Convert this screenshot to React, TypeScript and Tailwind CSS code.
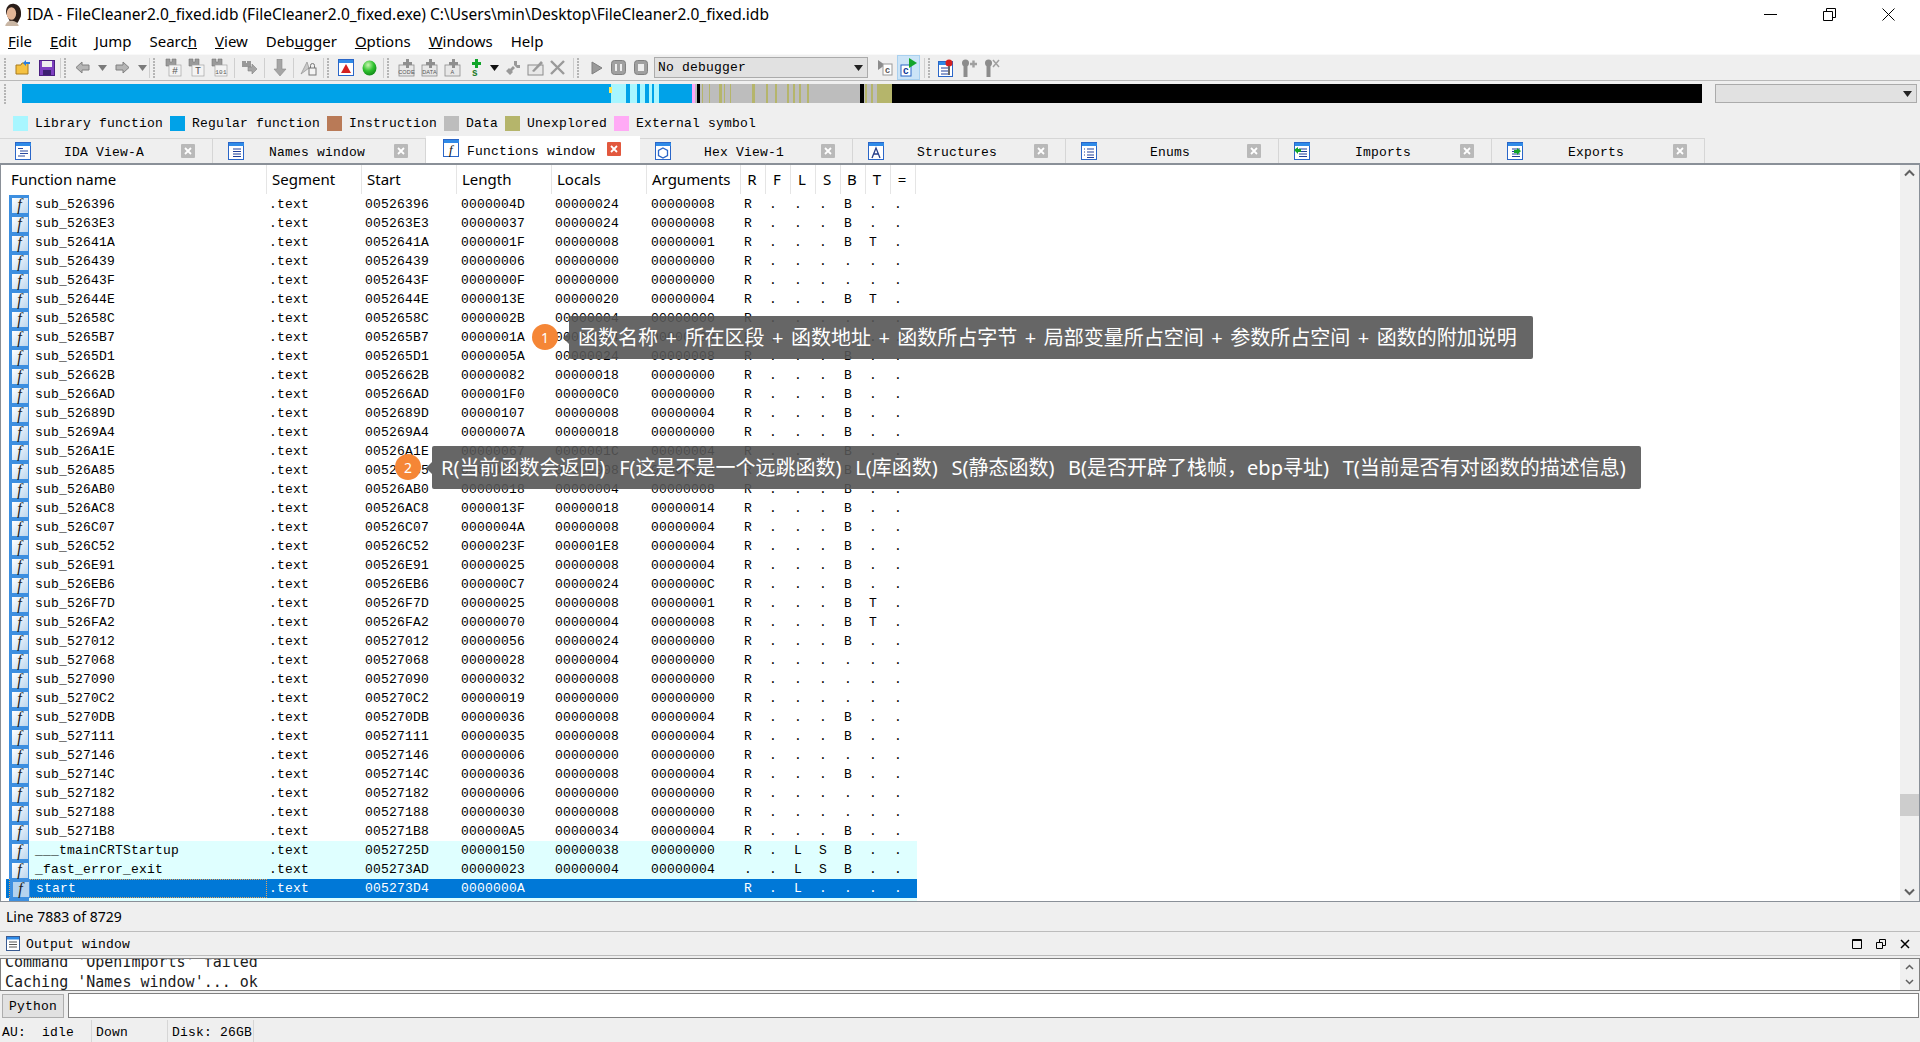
import type { ReactNode } from "react";

const SANS = "font-['Noto_Sans','Noto_Sans_CJK_SC',sans-serif]";

const rows = [
  "sub_526396 00526396 0000004D 00000024 00000008 R...B..",
  "sub_5263E3 005263E3 00000037 00000024 00000008 R...B..",
  "sub_52641A 0052641A 0000001F 00000008 00000001 R...BT.",
  "sub_526439 00526439 00000006 00000000 00000000 R......",
  "sub_52643F 0052643F 0000000F 00000000 00000000 R......",
  "sub_52644E 0052644E 0000013E 00000020 00000004 R...BT.",
  "sub_52658C 0052658C 0000002B 00000004 00000000 R......",
  "sub_5265B7 005265B7 0000001A 00000004 00000000 R......",
  "sub_5265D1 005265D1 0000005A 00000024 00000008 R...B..",
  "sub_52662B 0052662B 00000082 00000018 00000000 R...B..",
  "sub_5266AD 005266AD 000001F0 000000C0 00000000 R...B..",
  "sub_52689D 0052689D 00000107 00000008 00000004 R...B..",
  "sub_5269A4 005269A4 0000007A 00000018 00000000 R...B..",
  "sub_526A1E 00526A1E 00000067 0000001C 00000004 R...B..",
  "sub_526A85 00526A85 0000002B 00000008 00000004 R...B..",
  "sub_526AB0 00526AB0 00000018 00000004 00000008 R...B..",
  "sub_526AC8 00526AC8 0000013F 00000018 00000014 R...B..",
  "sub_526C07 00526C07 0000004A 00000008 00000004 R...B..",
  "sub_526C52 00526C52 0000023F 000001E8 00000004 R...B..",
  "sub_526E91 00526E91 00000025 00000008 00000004 R...B..",
  "sub_526EB6 00526EB6 000000C7 00000024 0000000C R...B..",
  "sub_526F7D 00526F7D 00000025 00000008 00000001 R...BT.",
  "sub_526FA2 00526FA2 00000070 00000004 00000008 R...BT.",
  "sub_527012 00527012 00000056 00000024 00000000 R...B..",
  "sub_527068 00527068 00000028 00000004 00000000 R......",
  "sub_527090 00527090 00000032 00000008 00000000 R......",
  "sub_5270C2 005270C2 00000019 00000000 00000000 R......",
  "sub_5270DB 005270DB 00000036 00000008 00000004 R...B..",
  "sub_527111 00527111 00000035 00000008 00000004 R...B..",
  "sub_527146 00527146 00000006 00000000 00000000 R......",
  "sub_52714C 0052714C 00000036 00000008 00000004 R...B..",
  "sub_527182 00527182 00000006 00000000 00000000 R......",
  "sub_527188 00527188 00000030 00000008 00000000 R......",
  "sub_5271B8 005271B8 000000A5 00000034 00000004 R...B..",
  "___tmainCRTStartup 0052725D 00000150 00000038 00000000 R.LSB..",
  "_fast_error_exit 005273AD 00000023 00000004 00000004 ..LSB..",
  "start 005273D4 0000000A - - R.L....",
  "__security_check_cookie(x) 00527400 00000010 00000000 00000004 R.L....",
];

const OLIVE = "#b5b56b";
const GRAY = "#bdbdbd";
const CYAN = "#a8f6ff";
const BLUE = "#00a2e8";
const navSegments: [number, number, string][] = [
  [0, 589, BLUE], [589, 604, CYAN], [604, 608, BLUE], [608, 615, CYAN], [615, 618, BLUE], [618, 623, CYAN],
  [623, 627, BLUE], [627, 630, CYAN], [630, 632, BLUE], [632, 637, CYAN], [637, 670, BLUE], [670, 673, "#ffa8f5"],
  [673, 675, GRAY], [675, 678, "#000"], [678, 838, GRAY],
  [680, 681, OLIVE], [687, 688, OLIVE], [697, 700, OLIVE], [702, 703, OLIVE], [708, 709, OLIVE], [730, 733, OLIVE],
  [744, 746, OLIVE], [753, 755, OLIVE], [765, 767, OLIVE], [771, 773, OLIVE], [777, 779, OLIVE], [785, 787, OLIVE],
  [838, 842, "#000"], [842, 870, GRAY], [843, 845, OLIVE], [849, 851, OLIVE], [855, 870, OLIVE], [870, 1680, "#000"],
];

const legend = [
  ["Library function", "bg-[#a8f6ff]", "w-[157px]"],
  ["Regular function", "bg-[#00a2e8]", "w-[157px]"],
  ["Instruction", "bg-[#b97a57]", "w-[117px]"],
  ["Data", "bg-[#bdbdbd]", "w-[61px]"],
  ["Unexplored", "bg-[#b5b56b]", "w-[109px]"],
  ["External symbol", "bg-[#ffaaf5]", "w-[150px]"],
];

const Handle = () => (
  <div className="flex h-[20px] w-[3px] shrink-0 flex-col justify-between">
    {[0, 1, 2, 3, 4, 5, 6].map((i) => (
      <span key={i} className="h-[2px] w-[2px] bg-[#b5b5b5]" />
    ))}
  </div>
);

const Sep = () => <span className="h-[20px] w-px shrink-0 bg-[#cfcfcf]" />;

const Caret = ({ color = "#7a7a7a" }: { color?: string }) => (
  <svg width="9" height="6" viewBox="0 0 9 6" className="shrink-0">
    <path d="M0 0h9L4.5 6z" fill={color} />
  </svg>
);

const Binoc = ({ label, small }: { label: string; small?: boolean }) => (
  <svg width="17" height="19" viewBox="0 0 17 19" className="shrink-0">
    <path d="M1 1h4v3h2V1h4v7H1z" fill="#9a9a9a" stroke="#777" strokeWidth=".6" />
    <rect x="4" y="7" width="12" height="11" fill="#f4f4f4" stroke="#a5a5a5" strokeWidth=".7" />
    <text x="10" y="16" fontSize={small ? 6 : 10} textAnchor="middle" fontFamily="Liberation Mono" fill="#555">
      {label}
    </text>
  </svg>
);

const PlusBox = ({ label }: { label: string }) => (
  <svg width="17" height="19" viewBox="0 0 17 19" className="shrink-0">
    <rect x="1" y="7" width="15" height="11" fill="#e8e8e8" stroke="#8c8c8c" strokeWidth=".8" />
    <path d="M8 1h3v3h3v3h-3v3H8V7H5V4h3z" fill="#8f8f8f" />
    <text x="8.5" y="16" fontSize="5.5" textAnchor="middle" fontFamily="Liberation Sans" fill="#555">
      {label}
    </text>
  </svg>
);

const WinIcon = ({ children }: { children: ReactNode }) => (
  <svg width="17" height="19" viewBox="0 0 17 19" className="shrink-0">
    <rect x=".5" y=".5" width="15" height="17" fill="#fff" stroke="#2a66c8" />
    <rect x="1" y="1" width="15" height="3" fill="#2f8be8" />
    {children}
  </svg>
);

const listLines = (
  <path d="M5 7h8M5 9.500h8M5 12h8M5 14.500h8" stroke="#1f3f9a" strokeWidth="1.200" />
);

const tabs: { label: string; icon: ReactNode }[] = [
  { label: "IDA View-A", icon: <WinIcon><path d="M3 6.500h5M5 9h8M5 11.500h8M3 14h7" stroke="#2b4aa0" /></WinIcon> },
  { label: "Names window", icon: <WinIcon>{listLines}</WinIcon> },
  { label: "Functions window", icon: <WinIcon><text x="8" y="15" fontSize="13" fontStyle="italic" textAnchor="middle" fontFamily="Liberation Serif" fill="#111">f</text></WinIcon> },
  { label: "Hex View-1", icon: <WinIcon><path d="M8 6l4.500 2.500v5L8 16l-4.500-2.500v-5z" fill="none" stroke="#2a66c8" strokeWidth="1.300" /></WinIcon> },
  { label: "Structures", icon: <WinIcon><path d="M4 16L8 6l4 10M5.500 12h5" fill="none" stroke="#29408a" strokeWidth="1.300" /></WinIcon> },
  { label: "Enums", icon: <WinIcon><path d="M6 7h7M6 10h7M6 13h7M6 15.500h7M3 7h1M3 10h1M3 13h1" stroke="#1f3f9a" /></WinIcon> },
  { label: "Imports", icon: <WinIcon>{listLines}<path d="M0 8l4-3v2h3v3H4v2z" fill="#12a52a" /></WinIcon> },
  { label: "Exports", icon: <WinIcon>{listLines}<path d="M14 9l-4-3v2H7v3h3v2z" fill="#12a52a" /></WinIcon> },
];

const TabClose = ({ active }: { active: boolean }) => (
  <span
    className={`flex h-[14px] w-[14px] shrink-0 items-center justify-center rounded-[1px] ${
      active ? "bg-[#e2583e]" : "bg-[#b9b9b9]"
    }`}
  >
    <svg width="8" height="8" viewBox="0 0 8 8">
      <path d="M1 1l6 6M7 1L1 7" stroke="#fff" strokeWidth="1.800" />
    </svg>
  </span>
);

const FuncIcon = ({ selected }: { selected?: boolean }) => (
  <svg width="20" height="19" viewBox="0 0 20 19" className="shrink-0">
    <defs>
      <linearGradient id="fbody" x1="0" y1="0" x2="1" y2="1">
        <stop offset="0" stopColor="#fff" />
        <stop offset="1" stopColor="#bcd6ee" />
      </linearGradient>
    </defs>
    <rect width="20" height="19" fill="#3d8fe0" />
    <rect x="3" y="3" width="16" height="15" fill={selected ? "#b4d2ee" : "url(#fbody)"} />
    <text x="10.500" y="15" fontSize="16" fontStyle="italic" textAnchor="middle" fontFamily="Liberation Serif" fill="#222">
      f
    </text>
  </svg>
);

const headers: [string, string][] = [
  ["Function name", "w-[261px] pl-[5px]"],
  ["Segment", "w-[95px] pl-[5px]"],
  ["Start", "w-[95px] pl-[5px]"],
  ["Length", "w-[95px] pl-[5px]"],
  ["Locals", "w-[95px] pl-[5px]"],
  ["Arguments", "w-[94px] pl-[5px]"],
];

const Row = ({ line, index }: { line: string; index: number }) => {
  const [name, start, len, locals, args, flags] = line.split(" ");
  const selected = name === "start";
  const library = index >= 34;
  return (
    <div className={`flex h-[19px] w-[911px] shrink-0 items-center ${selected ? "bg-[#0078d7] text-white" : "text-black"}`}>
      <div className={`ml-[3px] flex h-[19px] w-[258px] items-center ${selected ? "border border-dotted border-[#e8a45c]" : ""}`}>
        <FuncIcon selected={selected} />
        <span className={`flex h-[19px] flex-1 items-center pl-[6px] ${library && !selected ? "bg-[#dfffff]" : ""}`}>{name}</span>
      </div>
      <div className={`flex h-[19px] flex-1 items-center ${library && !selected ? "bg-[#dfffff]" : ""}`}>
        <span className="w-[95px] pl-[2px]">.text</span>
        <span className="w-[95px] pl-[3px]">{start}</span>
        <span className="w-[95px] pl-[4px]">{len}</span>
        <span className="w-[95px] pl-[3px]">{locals === "-" ? "" : locals}</span>
        <span className="w-[94px] pl-[4px]">{args === "-" ? "" : args}</span>
        {flags.split("").map((f, i) => (
          <span key={i} className="w-[25px] pl-[3px]">{f}</span>
        ))}
      </div>
    </div>
  );
};

const Annotation = ({ n, text, boxClass, badgeClass }: { n: string; text: string; boxClass: string; badgeClass: string }) => (
  <>
    <div className={`absolute flex h-[43px] items-center rounded-[2px] bg-[#555555]/90 text-[20px] tracking-normal whitespace-pre text-white ${SANS} ${boxClass}`}>
      <span className="absolute top-[16px] left-[-6px] h-0 w-0 border-y-[6px] border-r-[6px] border-y-transparent border-r-[#555555]/90" />
      {text}
    </div>
    <div className={`absolute flex h-[26px] w-[26px] items-center justify-center rounded-full bg-[#f58636] text-[14px] tracking-normal text-white ${SANS} ${badgeClass}`}>
      {n}
    </div>
  </>
);

const App = () => (
  <div className="relative flex h-[1042px] w-[1920px] flex-col overflow-hidden bg-[#efefef] font-['Liberation_Mono',monospace] text-[13px] tracking-[0.2px] text-black">
    {/* Title bar */}
    <div className={`flex h-[29px] shrink-0 items-center bg-white pl-[3px] text-[15.5px] tracking-normal ${SANS}`}>
      <svg width="20" height="23" viewBox="0 0 19 22" className="shrink-0">
        <path d="M3 10C2 3 7 0 11 1c5 1 7 6 6 12l-3 6H7z" fill="#2a1d18" />
        <ellipse cx="8" cy="10" rx="4.500" ry="6" fill="#e3b596" />
        <path d="M2 22c1-4 4-5 6-5s6 1 7 5z" fill="#c9b6a4" />
      </svg>
      <span className="ml-[4px]">IDA - FileCleaner2.0_fixed.idb (FileCleaner2.0_fixed.exe) C:\Users\min\Desktop\FileCleaner2.0_fixed.idb</span>
      <div className="ml-auto flex items-center gap-[46px] pr-[25px]">
        <svg width="13" height="13" viewBox="0 0 13 13"><path d="M0 6.500h13" stroke="#000" /></svg>
        <svg width="13" height="13" viewBox="0 0 13 13" fill="none" stroke="#000"><path d="M.5 3.500h9v9h-9zM3.500 3.500v-3h9v9h-3" /></svg>
        <svg width="13" height="13" viewBox="0 0 13 13"><path d="M.5.500l12 12M12.500.500l-12 12" stroke="#000" /></svg>
      </div>
    </div>

    {/* Menu bar */}
    <div className={`flex h-[25px] shrink-0 items-center gap-[18px] bg-white pl-[8px] text-[15px] tracking-normal ${SANS}`}>
      <span><u>F</u>ile</span>
      <span><u>E</u>dit</span>
      <span><u>J</u>ump</span>
      <span>Searc<u>h</u></span>
      <span><u>V</u>iew</span>
      <span>Deb<u>u</u>gger</span>
      <span><u>O</u>ptions</span>
      <span><u>W</u>indows</span>
      <span>Help</span>
    </div>

    {/* Toolbar */}
    <div className="flex h-[27px] shrink-0 items-center border-t border-b border-t-[#f9f9f9] border-b-[#b9b9b9]">
      <div className="flex w-[60px] shrink-0 items-center pl-[4px]">
        <Handle />
        <svg width="17" height="17" viewBox="0 0 17 17" className="ml-[8px] shrink-0">
          <path d="M1 6h5l1-2h6v11H1z" fill="#f5c242" stroke="#a87a1c" />
          <path d="M8 4l3-3v2h4v2h-4v2z" fill="#2a7fe0" />
        </svg>
        <svg width="16" height="16" viewBox="0 0 16 16" className="ml-[7px] shrink-0">
          <rect x=".5" y=".5" width="15" height="15" fill="#7d3fc0" stroke="#4a1f80" />
          <rect x="3" y="1" width="10" height="6" fill="#eee" />
          <rect x="4" y="10" width="8" height="5" fill="#3b1f70" />
        </svg>
      </div>
      <Sep />
      <div className="flex w-[88px] shrink-0 items-center gap-[8px] pl-[3px]">
        <Handle />
        <svg width="15" height="13" viewBox="0 0 15 13" className="shrink-0"><path d="M7 1L1 6.500 7 12V9h7V4H7z" fill="#b5b5b5" stroke="#808080" /></svg>
        <Caret />
        <svg width="15" height="13" viewBox="0 0 15 13" className="shrink-0"><path d="M8 1l6 5.500L8 12V9H1V4h7z" fill="#b5b5b5" stroke="#808080" /></svg>
        <Caret />
      </div>
      <Sep />
      <div className="flex w-[173px] shrink-0 items-center gap-[6px] pl-[3px]">
        <Handle />
        <span className="ml-[3px] flex items-center gap-[6px]">
          <Binoc label="#" />
          <Binoc label="T" />
          <Binoc label="101" small />
        </span>
        <Sep />
        <svg width="17" height="17" viewBox="0 0 17 17" className="shrink-0"><path d="M1 2h4v2h1V2h4v6H1z" fill="#999" /><path d="M7 8h4V5l5 5-5 5v-3H7z" fill="#a5a5a5" stroke="#808080" strokeWidth=".6" /></svg>
        <Sep />
        <svg width="14" height="18" viewBox="0 0 14 18" className="ml-[2px] shrink-0"><path d="M4 0h5v10h4l-6 7-6-7h3z" fill="#a5a5a5" stroke="#8a8a8a" strokeWidth=".6" /></svg>
        <Sep />
        <svg width="17" height="17" viewBox="0 0 17 17" className="shrink-0"><path d="M1 15L7 3l2 6z" fill="#c9c9c9" stroke="#909090" strokeWidth=".7" /><rect x="9" y="9" width="7" height="7" fill="#f4f4f4" stroke="#777" /><path d="M10.500 9V6.500a2 2 0 014 0V9" fill="none" stroke="#777" /></svg>
      </div>
      <Sep />
      <div className="flex w-[59px] shrink-0 items-center gap-[8px] pl-[3px]">
        <Handle />
        <svg width="16" height="17" viewBox="0 0 16 17" className="shrink-0"><rect x=".5" y=".5" width="15" height="16" fill="#fff" stroke="#2a66c8" /><rect x="1" y="1" width="14" height="3" fill="#2f8be8" /><path d="M8 5l5 9H3z" fill="#d42020" /></svg>
        <svg width="15" height="16" viewBox="0 0 15 16" className="shrink-0">
          <defs>
            <radialGradient id="ball" cx=".4" cy=".3" r=".8"><stop offset="0" stopColor="#c8f5b0" /><stop offset=".5" stopColor="#2fc22f" /><stop offset="1" stopColor="#0a7a14" /></radialGradient>
          </defs>
          <ellipse cx="7.500" cy="8" rx="7" ry="7.500" fill="url(#ball)" />
        </svg>
      </div>
      <Sep />
      <div className="flex w-[189px] shrink-0 items-center gap-[6px] pl-[3px]">
        <Handle />
        <span className="ml-[2px] flex items-center gap-[6px]">
          <PlusBox label="CODE" />
          <PlusBox label="DATA" />
          <PlusBox label="A" />
          <svg width="17" height="18" viewBox="0 0 17 18" className="shrink-0"><path d="M8 0h3v3h3v3h-3v3H8V6H5V3h3z" fill="#12a52a" /><text x="5" y="17" fontSize="10" fontWeight="700" fontFamily="Liberation Sans" fill="#1e7a2a">s</text></svg>
          <Caret color="#111" />
          <svg width="16" height="16" viewBox="0 0 16 16" className="shrink-0"><path d="M9 1h3v4h3v3h-3v0l-3-3zM1 11l3-3 1 1 3-3 2 2-3 3 1 1-3 3z" fill="#999" /></svg>
          <svg width="17" height="17" viewBox="0 0 17 17" className="shrink-0"><rect x="1" y="6" width="15" height="10" fill="#e8e8e8" stroke="#8c8c8c" /><path d="M5 12L14 2l2 2-9 9z" fill="#9a9a9a" /></svg>
          <svg width="15" height="15" viewBox="0 0 15 15" className="shrink-0"><path d="M1 1l13 13M14 1L1 14" stroke="#9a9a9a" strokeWidth="2.400" /></svg>
        </span>
      </div>
      <Sep />
      <div className="flex w-[350px] shrink-0 items-center pl-[3px]">
        <Handle />
        <svg width="12" height="14" viewBox="0 0 12 14" className="ml-[11px] shrink-0"><path d="M1 1l10 6-10 6z" fill="#9a9a9a" stroke="#808080" /></svg>
        <svg width="15" height="15" viewBox="0 0 15 15" className="ml-[8px] shrink-0"><rect x=".5" y=".5" width="14" height="14" rx="3" fill="#a0a0a0" stroke="#808080" /><path d="M5 4v7M10 4v7" stroke="#eee" strokeWidth="2" /></svg>
        <svg width="14" height="15" viewBox="0 0 14 15" className="ml-[8px] shrink-0"><rect x=".5" y=".5" width="13" height="14" rx="3" fill="#a0a0a0" stroke="#808080" /><rect x="4" y="4" width="6" height="7" fill="#eee" /></svg>
        <div className="ml-[6px] flex h-[21px] w-[214px] shrink-0 items-center justify-between border border-[#ababab] bg-[#e1e1e1] pr-[4px] pl-[3px]">
          <span>No debugger</span>
          <Caret color="#222" />
        </div>
        <span className="ml-[3px]"><Sep /></span>
        <svg width="16" height="17" viewBox="0 0 16 17" className="ml-[6px] shrink-0"><path d="M1 1l7 5-7 5z" fill="#8c8c8c" /><rect x="6" y="5" width="9" height="11" fill="#fff" stroke="#999" /><text x="10.500" y="14" fontSize="9" fontWeight="700" textAnchor="middle" fontFamily="Liberation Sans" fill="#555">c</text></svg>
        <span className="ml-[4px] flex h-[25px] w-[23px] shrink-0 items-center justify-center border border-[#a9d0ef] bg-[#cce4f7]">
          <svg width="17" height="19" viewBox="0 0 17 19"><rect x="1" y="7" width="10" height="11" fill="#fff" stroke="#2a66c8" /><text x="6" y="16" fontSize="10" fontWeight="700" textAnchor="middle" fontFamily="Liberation Sans" fill="#123a9a">c</text><path d="M9 0l8 5-8 5z" fill="#12a52a" /></svg>
        </span>
      </div>
      <Sep />
      <div className="flex items-center gap-[7px] pl-[3px]">
        <Handle />
        <svg width="16" height="18" viewBox="0 0 16 18" className="shrink-0"><rect x=".5" y="2.500" width="14" height="15" fill="#fff" stroke="#2a66c8" /><rect x="1" y="3" width="13" height="3" fill="#2f8be8" /><path d="M3 9h7M3 12h7M3 15h7" stroke="#1f3f9a" /><circle cx="11" cy="4" r="3.500" fill="#d42020" /><path d="M11 7v9" stroke="#666" strokeWidth="2" /></svg>
        <svg width="16" height="18" viewBox="0 0 16 18" className="shrink-0"><circle cx="4.500" cy="4" r="3.500" fill="#8c8c8c" /><path d="M4.500 7v11" stroke="#8c8c8c" strokeWidth="4" /><path d="M9 5h7M12.500 1.500v7" stroke="#a0a0a0" strokeWidth="2.400" /></svg>
        <svg width="16" height="18" viewBox="0 0 16 18" className="shrink-0"><circle cx="4.500" cy="4" r="3.500" fill="#8c8c8c" /><path d="M4.500 7v11" stroke="#8c8c8c" strokeWidth="4" /><path d="M9 1l6 7M15 1L9 8" stroke="#a0a0a0" strokeWidth="1.500" /></svg>
      </div>
    </div>

    {/* Overview navigator and legend */}
    <div className="flex h-[57px] shrink-0 flex-col">
      <div className="mt-[3px] flex h-[19px] items-start">
        <div className="ml-[4px] flex h-[19px] w-[18px] shrink-0">
          <Handle />
        </div>
        <svg width="1680" height="19" viewBox="0 0 1680 19" className="shrink-0">
          {navSegments.map(([a, b, c], i) => (
            <rect key={i} x={a} y="0" width={b - a} height="19" fill={c} />
          ))}
          <rect x="587" y="3" width="3" height="6" fill="#ffe85c" />
        </svg>
        <div className="ml-[13px] flex h-[19px] w-[202px] shrink-0 items-center justify-end border border-[#ababab] bg-[#e1e1e1] pr-[4px]">
          <Caret color="#222" />
        </div>
      </div>
      <div className="mt-[11px] flex items-center pl-[13px]">
        {legend.map(([label, swatch, width]) => (
          <div key={label} className={`flex items-center ${width}`}>
            <span className={`h-[15px] w-[15px] shrink-0 ${swatch}`} />
            <span className="ml-[7px] whitespace-pre">{label}</span>
          </div>
        ))}
      </div>
    </div>

    {/* Tabs */}
    <div className="flex h-[25px] shrink-0 items-end">
      {tabs.map((t) => {
        const active = t.label === "Functions window";
        return active ? (
          <div key={t.label} className="flex h-[27px] w-[214px] shrink-0 items-center bg-white pr-[19px] pb-[2px] pl-[17px]">
            {t.icon}
            <span className="ml-[7px] flex-1 pt-[6px]">{t.label}</span>
            <TabClose active />
          </div>
        ) : (
          <div key={t.label} className="flex h-[25px] w-[213px] shrink-0 items-center border-t border-r border-[#d6d6d6] pr-[17px] pl-[15px]">
            {t.icon}
            <span className="mr-[5px] flex-1 pt-[4px] text-center">{t.label}</span>
            <TabClose active={false} />
          </div>
        );
      })}
    </div>

    {/* Functions table */}
    <div className="flex h-[739px] shrink-0 overflow-hidden border-t-2 border-r border-b border-l border-[#8a9098] bg-white">
      <div className="min-w-0 flex-1 overflow-hidden pl-[5px]">
        <div className={`flex h-[30px] items-center text-[15px] tracking-normal ${SANS}`}>
          {headers.map(([h, cls]) => (
            <div key={h} className={`flex h-[29px] items-center self-start border-r border-[#e5e5e5] ${cls}`}>{h}</div>
          ))}
          {["R", "F", "L", "S", "B", "T", "="].map((h) => (
            <div key={h} className="flex h-[29px] w-[25px] items-center justify-center self-start border-r border-[#e5e5e5] pr-[2px]">{h}</div>
          ))}
        </div>
        <div className="flex flex-col">
          {rows.map((line, i) => (
            <Row key={i} line={line} index={i} />
          ))}
        </div>
      </div>
      <div className="flex w-[19px] shrink-0 flex-col items-center bg-[#f0f0f0]">
        <svg width="11" height="8" viewBox="0 0 11 8" className="mt-[4px] shrink-0"><path d="M1 6.500l4.500-4.500 4.500 4.500" fill="none" stroke="#606060" strokeWidth="2" /></svg>
        <div className="mt-[617px] h-[22px] w-[19px] shrink-0 bg-[#cdcdcd]" />
        <svg width="11" height="8" viewBox="0 0 11 8" className="mt-[72px] shrink-0"><path d="M1 1.500l4.500 4.500 4.500-4.500" fill="none" stroke="#606060" strokeWidth="2" /></svg>
      </div>
    </div>

    {/* Line counter */}
    <div className={`flex h-[28px] shrink-0 items-center pl-[6px] text-[14px] tracking-normal ${SANS}`}>Line 7883 of 8729</div>

    {/* Output window */}
    <div className="mt-px flex h-[25px] shrink-0 items-center border-t border-b border-[#bcbcbc] pr-[6px] pl-[6px]">
      <svg width="14" height="15" viewBox="0 0 14 15" className="shrink-0"><rect x=".5" y=".5" width="13" height="14" fill="#fff" stroke="#3a5a90" /><rect x="1" y="1" width="12" height="2.500" fill="#2f8be8" /><path d="M3 6h8M3 8.500h8M3 11h8" stroke="#555" /></svg>
      <span className="ml-[6px] pt-[3px]">Output window</span>
      <div className="ml-auto flex items-center gap-[14px] pr-[4px]">
        <svg width="10" height="10" viewBox="0 0 10 10"><path d="M.5.500h9v9h-9zM.5 1.500h9" fill="none" stroke="#000" /></svg>
        <svg width="10" height="10" viewBox="0 0 10 10" fill="none" stroke="#000"><path d="M.5 3.500h6v6h-6zM3.500 3.500v-3h6v6h-3" /></svg>
        <svg width="10" height="10" viewBox="0 0 10 10"><path d="M1 1l8 8M9 1L1 9" stroke="#000" strokeWidth="1.500" /></svg>
      </div>
    </div>
    <div className="mt-[2px] flex h-[33px] shrink-0 overflow-hidden border border-[#808080] bg-white">
      <div className="min-w-0 flex-1 overflow-hidden pl-[4px] font-['DejaVu_Sans_Mono',monospace] text-[15px] leading-[20px] tracking-normal whitespace-pre text-[#1b1b1b]">
        <div className="mt-[-7px]">Command 'OpenImports' failed</div>
        <div>Caching 'Names window'... ok</div>
      </div>
      <div className="flex w-[19px] shrink-0 flex-col items-center justify-between bg-[#f0f0f0] py-[5px]">
        <svg width="9" height="6" viewBox="0 0 9 6"><path d="M1 5l3.500-3.500 3.500 3.500" fill="none" stroke="#606060" strokeWidth="1.500" /></svg>
        <svg width="9" height="6" viewBox="0 0 9 6"><path d="M1 1l3.500 3.500 3.500-3.500" fill="none" stroke="#606060" strokeWidth="1.500" /></svg>
      </div>
    </div>

    {/* Python input */}
    <div className="mt-[2px] flex h-[25px] shrink-0 items-center pr-px pl-[2px]">
      <div className="flex h-[24px] w-[62px] shrink-0 items-center justify-center border border-[#adadad] bg-[#e1e1e1] pt-[2px]">Python</div>
      <div className="ml-[4px] h-[25px] flex-1 border border-[#808080] bg-white" />
    </div>

    {/* Status bar */}
    <div className="flex h-[24px] shrink-0 items-center pt-[2px] pl-[2px]">
      <div className="flex h-[22px] w-[90px] items-center border-r border-[#d6d6d6] pt-[3px]">
        <span className="w-[40px]">AU:</span>
        <span>idle</span>
      </div>
      <div className="flex h-[22px] w-[76px] items-center border-r border-[#d6d6d6] pt-[3px] pl-[4px]">Down</div>
      <div className="flex h-[22px] w-[86px] items-center border-r border-[#d6d6d6] pt-[3px] pl-[4px]">Disk: 26GB</div>
    </div>

    {/* Annotations over the table */}
    <Annotation
      n="1"
      text="函数名称 + 所在区段 + 函数地址 + 函数所占字节 + 局部变量所占空间 + 参数所占空间 + 函数的附加说明"
      boxClass="top-[316px] left-[569px] w-[964px] pl-[9px] [word-spacing:2.3px]"
      badgeClass="top-[324px] left-[532px]"
    />
    <Annotation
      n="2"
      text="R(当前函数会返回) F(这是不是一个远跳函数) L(库函数) S(静态函数) B(是否开辟了栈帧，ebp寻址) T(当前是否有对函数的描述信息)"
      boxClass="top-[446px] left-[432px] w-[1209px] pl-[9px] [word-spacing:8.5px]"
      badgeClass="top-[454px] left-[395px]"
    />
  </div>
);

export default App;
